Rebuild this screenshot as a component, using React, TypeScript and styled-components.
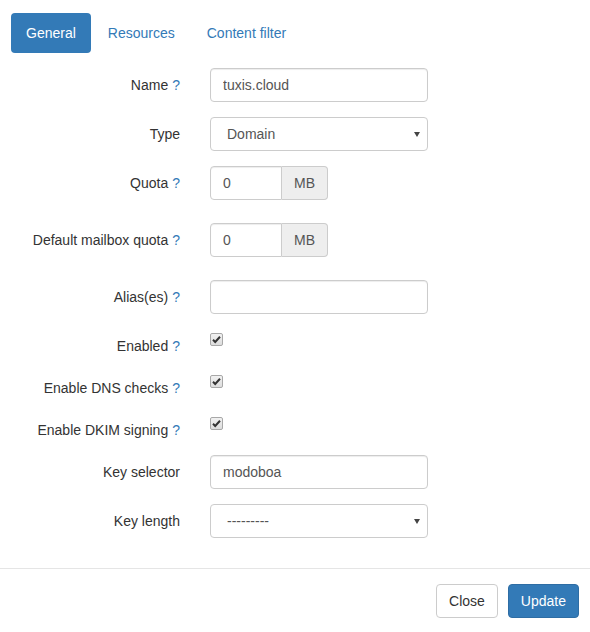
import * as React from 'react'
import styled, { createGlobalStyle } from 'styled-components'

const GlobalStyle = createGlobalStyle`
  html, body {
    margin: 0;
    padding: 0;
    background: #fff;
  }
  body {
    font-family: "Liberation Sans", Arial, sans-serif;
    font-size: 14px;
    line-height: 20px;
    color: #333;
  }
  * {
    box-sizing: border-box;
  }
`

const Page = styled.div`
  width: 590px;
`

const ModalBody = styled.div`
  padding: 13px 15px 15px 11px;
`

const Nav = styled.ul`
  display: flex;
  list-style: none;
  margin: 0 0 15px 0;
  padding: 0;
  gap: 2px;
`

const Pill = styled.li<{ $active?: boolean }>`
  height: 40px;
  padding: 10px 15px;
  border-radius: 4px;
  color: ${p => (p.$active ? '#fff' : '#337ab7')};
  background: ${p => (p.$active ? '#337ab7' : 'transparent')};
  cursor: pointer;
`

const FormRow = styled.div<{ $space?: number }>`
  display: grid;
  grid-template-columns: 184px 233px;
  margin-bottom: ${p => p.$space ?? 15}px;
`

const Label = styled.label`
  padding: 7px 15px 0 0;
  text-align: right;
  white-space: nowrap;
`

const Help = styled.span`
  color: #337ab7;
  margin-left: 4px;
  cursor: help;
`

const Field = styled.div`
  padding-left: 15px;
`

const TextInput = styled.input`
  display: block;
  width: 218px;
  height: 34px;
  padding: 6px 12px;
  font: inherit;
  color: #555;
  border: 1px solid #ccc;
  border-radius: 4px;
  box-shadow: inset 0 1px 1px rgba(0, 0, 0, 0.075);
  outline: none;
`

const SelectWrap = styled.div`
  position: relative;
  width: 218px;
  &::after {
    content: '';
    position: absolute;
    right: 8px;
    top: 15px;
    border-left: 3px solid transparent;
    border-right: 3px solid transparent;
    border-top: 5px solid #444;
    pointer-events: none;
  }
`

const Select = styled.select`
  display: block;
  width: 100%;
  height: 34px;
  padding: 6px 12px 6px 16px;
  font: inherit;
  color: #555;
  background: #fff;
  border: 1px solid #ccc;
  border-radius: 4px;
  appearance: none;
  outline: none;
`

const InputGroup = styled.div`
  display: flex;
  width: 118px;
  height: 34px;
`

const GroupInput = styled(TextInput)`
  width: 72px;
  border-radius: 4px 0 0 4px;
`

const Addon = styled.span`
  width: 46px;
  padding: 6px 0;
  text-align: center;
  color: #555;
  background: #eee;
  border: 1px solid #ccc;
  border-left: none;
  border-radius: 0 4px 4px 0;
`

const CheckWrap = styled.div`
  height: 27px;
  padding-top: 2px;
`

const CheckBox = styled.span`
  display: block;
  width: 13px;
  height: 13px;
`

const Footer = styled.div`
  display: flex;
  justify-content: flex-end;
  gap: 10px;
  padding: 15px 11px 15px 15px;
  border-top: 1px solid #e5e5e5;
`

const Button = styled.button<{ $primary?: boolean }>`
  height: 34px;
  padding: 6px 12px;
  font: inherit;
  border-radius: 4px;
  border: 1px solid ${p => (p.$primary ? '#2e6da4' : '#ccc')};
  background: ${p => (p.$primary ? '#337ab7' : '#fff')};
  color: ${p => (p.$primary ? '#fff' : '#333')};
  cursor: pointer;
`

const Checked = () => (
    <CheckBox>
        <svg width="13" height="13" viewBox="0 0 13 13">
            <defs>
                <linearGradient id="cbg" x1="0" y1="0" x2="0" y2="1">
                    <stop offset="0" stopColor="#f2f2f2"/>
                    <stop offset="1" stopColor="#dcdcdc"/>
                </linearGradient>
            </defs>
            <rect x="0.5" y="0.5" width="12" height="12" rx="1.5" fill="url(#cbg)" stroke="#a8a8a8"/>
            <path d="M3 6.8 L5.2 9 L10 3.8" fill="none" stroke="#333" strokeWidth="2"/>
        </svg>
    </CheckBox>
)

interface RowProps {
    label: string
    help?: boolean
    space?: number
    children: React.ReactNode
}

const Row: React.FunctionComponent<RowProps> = (props: RowProps) => (
    <FormRow $space={ props.space }>
        <Label>
            { props.label }
            { props.help && <Help>?</Help> }
        </Label>
        <Field>{ props.children }</Field>
    </FormRow>
)

export default function App() {
    return (
        <Page>
            <GlobalStyle/>
            <ModalBody>
                <Nav>
                    <Pill $active>General</Pill>
                    <Pill>Resources</Pill>
                    <Pill>Content filter</Pill>
                </Nav>
                <form>
                    <Row label="Name" help>
                        <TextInput defaultValue="tuxis.cloud"/>
                    </Row>
                    <Row label="Type">
                        <SelectWrap>
                            <Select defaultValue="domain">
                                <option value="domain">Domain</option>
                                <option value="relay">Relay domain</option>
                            </Select>
                        </SelectWrap>
                    </Row>
                    <Row label="Quota" help space={ 23 }>
                        <InputGroup>
                            <GroupInput defaultValue="0"/>
                            <Addon>MB</Addon>
                        </InputGroup>
                    </Row>
                    <Row label="Default mailbox quota" help space={ 23 }>
                        <InputGroup>
                            <GroupInput defaultValue="0"/>
                            <Addon>MB</Addon>
                        </InputGroup>
                    </Row>
                    <Row label="Alias(es)" help>
                        <TextInput/>
                    </Row>
                    <Row label="Enabled" help>
                        <CheckWrap><Checked/></CheckWrap>
                    </Row>
                    <Row label="Enable DNS checks" help>
                        <CheckWrap><Checked/></CheckWrap>
                    </Row>
                    <Row label="Enable DKIM signing" help>
                        <CheckWrap><Checked/></CheckWrap>
                    </Row>
                    <Row label="Key selector">
                        <TextInput defaultValue="modoboa"/>
                    </Row>
                    <Row label="Key length">
                        <SelectWrap>
                            <Select defaultValue="">
                                <option value="">---------</option>
                                <option value="1024">1024</option>
                                <option value="2048">2048</option>
                            </Select>
                        </SelectWrap>
                    </Row>
                </form>
            </ModalBody>
            <Footer>
                <Button type="button">Close</Button>
                <Button type="button" $primary>Update</Button>
            </Footer>
        </Page>
    )
}
